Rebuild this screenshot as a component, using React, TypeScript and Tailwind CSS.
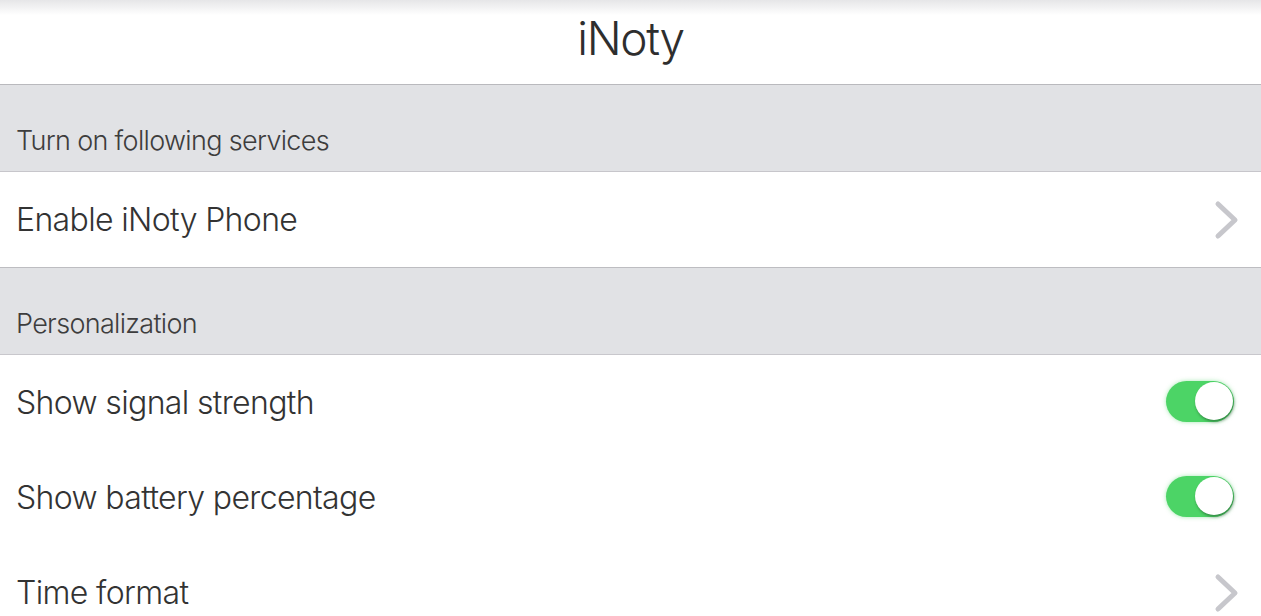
import { useState } from "react";

const font = { fontFamily: "Inter, 'Liberation Sans', sans-serif" };

function Chevron() {
  return (
    <svg width="26" height="40" viewBox="0 0 26 40" className="shrink-0">
      <path
        d="M4 4 L21 20 L4 36"
        fill="none"
        stroke="#c7c7cc"
        strokeWidth="5"
        strokeLinecap="round"
        strokeLinejoin="round"
      />
    </svg>
  );
}

function Toggle({ on, onClick }: { on: boolean; onClick: () => void }) {
  return (
    <button
      onClick={onClick}
      className={`relative mt-[3px] h-[41px] w-[68px] rounded-full transition-colors ${
        on ? "bg-[#4cd466] shadow-[0_0_4px_rgba(76,212,102,0.5)]" : "bg-[#e5e5ea]"
      }`}
    >
      <span
        className={`absolute top-[1.5px] h-[38px] w-[38px] rounded-full bg-white shadow-[1px_2px_3px_rgba(0,0,0,0.35)] transition-all ${
          on ? "left-[28.5px]" : "left-[1.5px]"
        }`}
      />
    </button>
  );
}

function SectionHeader({ title }: { title: string }) {
  return (
    <div className="flex h-[87px] items-end bg-[#e1e2e5] px-4 pb-[12px] border-b border-[#c8c7cc]">
      <span className="text-[27px] font-light leading-[36px] tracking-[-0.025em] text-[#3d3d3d]">{title}</span>
    </div>
  );
}

function Row({ label, children }: { label: string; children: React.ReactNode }) {
  return (
    <div className="flex h-[95px] items-center justify-between bg-white pl-4 pr-[21px]">
      <span className="text-[32px] font-light tracking-[-0.02em] text-[#333333]">{label}</span>
      {children}
    </div>
  );
}

export default function App() {
  const [signal, setSignal] = useState(true);
  const [battery, setBattery] = useState(true);

  return (
    <div className="h-[616px] w-full overflow-hidden bg-white" style={font}>
      {/* 헤더 */}
      <header className="flex h-[85px] items-start justify-center bg-gradient-to-b from-[#e6e6e8] via-white via-[18%] to-white pt-[12px] border-b border-[#b9b9bd] shadow-[0_1px_2px_rgba(0,0,0,0.12)]">
        <h1 className="text-[46px] font-light leading-[52px] tracking-[-0.03em] text-[#2e2e2e]">iNoty</h1>
      </header>

      <SectionHeader title="Turn on following services" />
      <div className="border-b border-[#bdbdc1] shadow-[0_1px_2px_rgba(0,0,0,0.1)]">
        <Row label="Enable iNoty Phone">
          <Chevron />
        </Row>
      </div>

      <SectionHeader title="Personalization" />
      <Row label="Show signal strength">
        <div className="pr-[6px]">
          <Toggle on={signal} onClick={() => setSignal(!signal)} />
        </div>
      </Row>
      <Row label="Show battery percentage">
        <div className="pr-[6px]">
          <Toggle on={battery} onClick={() => setBattery(!battery)} />
        </div>
      </Row>
      <Row label="Time format">
        <Chevron />
      </Row>
    </div>
  );
}
